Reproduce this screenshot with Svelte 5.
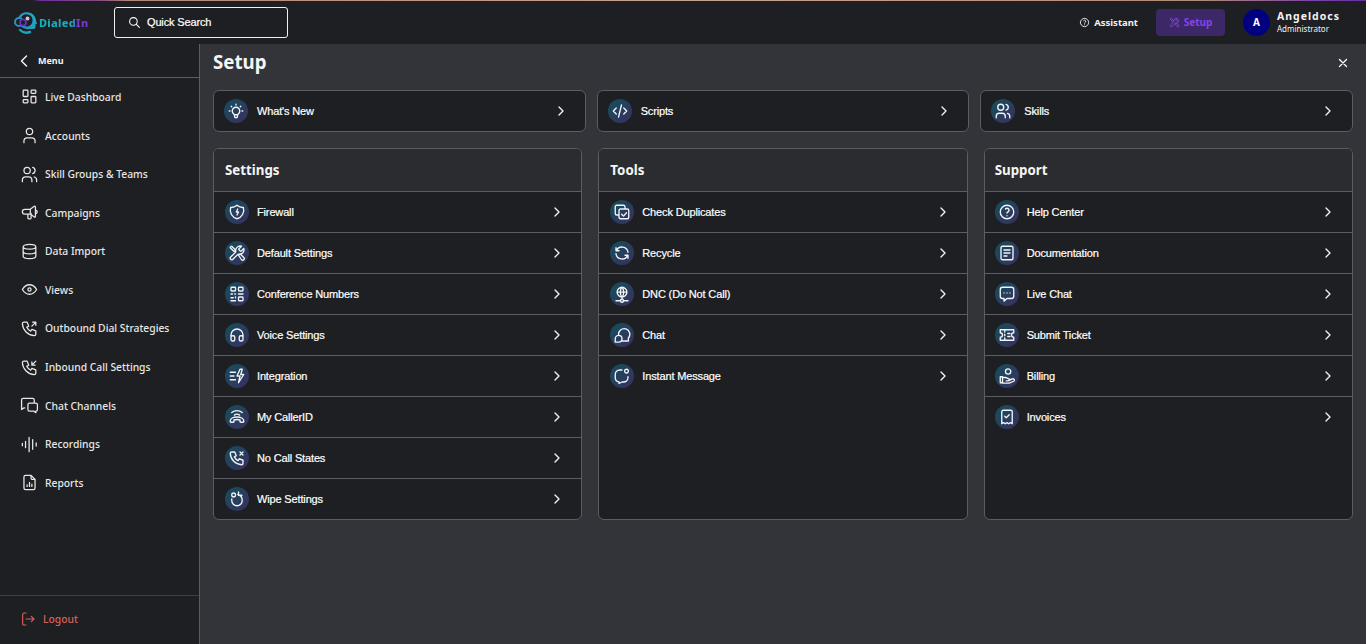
<script>
const I = {
  dash: "M5 4h4a1 1 0 0 1 1 1v6a1 1 0 0 1-1 1H5a1 1 0 0 1-1-1V5a1 1 0 0 1 1-1z M5 16h4a1 1 0 0 1 1 1v2a1 1 0 0 1-1 1H5a1 1 0 0 1-1-1v-2a1 1 0 0 1 1-1z M15 12h4a1 1 0 0 1 1 1v6a1 1 0 0 1-1 1h-4a1 1 0 0 1-1-1v-6a1 1 0 0 1 1-1z M15 4h4a1 1 0 0 1 1 1v2a1 1 0 0 1-1 1h-4a1 1 0 0 1-1-1V5a1 1 0 0 1 1-1z",
  user: "M8 7a4 4 0 1 0 8 0a4 4 0 0 0-8 0 M5 21v-2a4 4 0 0 1 4-4h6a4 4 0 0 1 4 4v2",
  users: "M5 7a4 4 0 1 0 8 0a4 4 0 1 0-8 0 M3 21v-2a4 4 0 0 1 4-4h4a4 4 0 0 1 4 4v2 M16 3.130a4 4 0 0 1 0 7.750 M21 21v-2a4 4 0 0 0-3-3.850",
  horn: "M6 8a3 3 0 0 0 0 6h1 M14 13v6a1 1 0 0 1-1 1h-2a1 1 0 0 1-1-1v-5 M13 8l5-3.800a1 1 0 0 1 1.500.8v12a1 1 0 0 1-1.500.8L13 14H6 M13 8H6 M13 8v6 M21 9.500a2.500 2.500 0 0 1 0 3.500",
  db: "M4 6a8 3 0 1 0 16 0a8 3 0 1 0-16 0 M4 6v6a8 3 0 0 0 16 0V6 M4 12v6a8 3 0 0 0 16 0v-6",
  eye: "M10 12a2 2 0 1 0 4 0a2 2 0 0 0-4 0 M21 12c-2.400 4-5.400 6-9 6s-6.600-2-9-6c2.400-4 5.400-6 9-6s6.600 2 9 6",
  out: "M5 4h4l2 5l-2.500 1.500a11 11 0 0 0 5 5l1.500-2.500l5 2v4a2 2 0 0 1-2 2a16 16 0 0 1-15-15a2 2 0 0 1 2-2 M15 9l5-5 M16 4h4v4",
  inb: "M5 4h4l2 5l-2.500 1.500a11 11 0 0 0 5 5l1.500-2.500l5 2v4a2 2 0 0 1-2 2a16 16 0 0 1-15-15a2 2 0 0 1 2-2 M15 9l5-5 M15 5v4h4",
  msgs: "M6 15H5l-3 2V5a2 2 0 0 1 2-2h12a2 2 0 0 1 2 2v4 M12 9h8a2 2 0 0 1 2 2v6a2 2 0 0 1-2 2v2l-3-2h-5a2 2 0 0 1-2-2v-6a2 2 0 0 1 2-2z",
  wave: "M3 10.500v3 M7 8v8 M11.500 3v18 M16 6v12 M20.500 10v4",
  report: "M14 3v4a1 1 0 0 0 1 1h4 M17 21H7a2 2 0 0 1-2-2V5a2 2 0 0 1 2-2h7l5 5v11a2 2 0 0 1-2 2 M9 17v-2 M12 17v-5 M15 17v-3",
  logout: "M9 3H6a2 2 0 0 0-2 2v14a2 2 0 0 0 2 2h3 M9 12h12 M17 8l4 4l-4 4",
  bulb: "M3 12h1m8-9v1m8 8h1m-15.400-6.400l.7.7m12.100-.7l-.7.7 M9 16a5 5 0 1 1 6 0a3.500 3.500 0 0 0-1 3a2 2 0 0 1-4 0a3.500 3.500 0 0 0-1-3 M9.700 17h4.600",
  code: "M7 8l-4 4l4 4 M17 8l4 4l-4 4 M14 4l-4 16",
  shield: "M12 3a12 12 0 0 0 8.500 3a12 12 0 0 1-8.500 15a12 12 0 0 1-8.500-15a12 12 0 0 0 8.500-3 M13 8l-2 4h3l-2 4",
  tools: "M14.700 6.300a1 1 0 0 0 0 1.400l1.600 1.600a1 1 0 0 0 1.400 0l3.300-3.300a6 6 0 0 1-7.500 7.500l-6.900 6.900a2.100 2.100 0 0 1-3-3l6.900-6.900a6 6 0 0 1 7.500-7.500z M3 4l2-1 5 5-2 2-5-5z M14 15l2-2 5 5a1.500 1.500 0 0 1-3 3z",
  qr: "M5 3h4a1 1 0 0 1 1 1v3a1 1 0 0 1-1 1H5a1 1 0 0 1-1-1V4a1 1 0 0 1 1-1z M15 3h4a1 1 0 0 1 1 1v3a1 1 0 0 1-1 1h-4a1 1 0 0 1-1-1V4a1 1 0 0 1 1-1z M15 16h4a1 1 0 0 1 1 1v3a1 1 0 0 1-1 1h-4a1 1 0 0 1-1-1v-3a1 1 0 0 1 1-1z M4 12h2 M9 12h1 M14 12h6 M4 17h3 M4 21h6 M10 16v1",
  head: "M4 15a2 2 0 0 1 2-2h1a2 2 0 0 1 2 2v3a2 2 0 0 1-2 2H6a2 2 0 0 1-2-2z M15 15a2 2 0 0 1 2-2h1a2 2 0 0 1 2 2v3a2 2 0 0 1-2 2h-1a2 2 0 0 1-2-2z M4 15v-3a8 8 0 0 1 16 0v3",
  integ: "M3 7h7 M3 12h5 M3 17h7 M16 3l-4 9h4l-2 9l7-11h-4l2-7z",
  caller: "M8.500 9.500a6 6 0 0 1 7 0 M5 6a11 11 0 0 1 14 0 M3 17c0-3 4-5 9-5s9 2 9 5v1a1 1 0 0 1-1 1h-3a1 1 0 0 1-1-1v-2c-3-1-5-1-8 0v2a1 1 0 0 1-1 1H4a1 1 0 0 1-1-1z",
  nocall: "M5 4h4l2 5l-2.500 1.500a11 11 0 0 0 5 5l1.500-2.500l5 2v4a2 2 0 0 1-2 2a16 16 0 0 1-15-15a2 2 0 0 1 2-2 M16 4l4 4m0-4l-4 4",
  wipe: "M5 6.500a2.500 2.500 0 1 0 5 0a2.500 2.500 0 1 0-5 0 M5 12v2a7 7 0 0 0 14 0c0-4-2-7-6-8 M14 2.500V7h4.500",
  dup: "M8 10a2 2 0 0 1 2-2h9a2 2 0 0 1 2 2v9a2 2 0 0 1-2 2h-9a2 2 0 0 1-2-2z M16 8V5a2 2 0 0 0-2-2H5a2 2 0 0 0-2 2v9a2 2 0 0 0 2 2h3 M11.500 15l2.500 2.500l4-4.500",
  recycle: "M20 11a8.100 8.100 0 0 0-15.500-2m-.5-4v4h4 M4 13a8.100 8.100 0 0 0 15.500 2m.5 4v-4h-4",
  dnc: "M12 3a6.500 6.500 0 1 0 0 13a6.500 6.500 0 0 0 0-13 M5.500 9.500h13 M12 3c-3 3-3 10 0 13 M12 3c3 3 3 10 0 13 M12 16v3 M4 21h6 M14 21h6 M10 21a2 2 0 1 0 4 0a2 2 0 0 0-4 0",
  chat: "M7.500 12A7.500 7.500 0 1 1 20.500 16V20H12 M3 17a4.500 4.500 0 1 1 9 0a4.500 4.500 0 0 1-4.500 4.500H3z",
  im: "M12 4H9a6 6 0 0 0-6 6v4a6 6 0 0 0 5 6v2l4-2h2a6 6 0 0 0 6-6v-1 M15.500 5.500a2.500 2.500 0 1 0 5 0a2.500 2.500 0 1 0-5 0",
  help: "M3 12a9 9 0 1 0 18 0a9 9 0 1 0-18 0 M12 17v.01 M12 13.500a1.500 1.500 0 0 1 1-1.500a2.600 2.600 0 1 0-3-4",
  doc: "M6 3h12a2 2 0 0 1 2 2v14a2 2 0 0 1-2 2H6a2 2 0 0 1-2-2V5a2 2 0 0 1 2-2z M8 8h8 M8 12h8 M8 16h4",
  live: "M3 6a3 3 0 0 1 3-3h12a3 3 0 0 1 3 3v9a3 3 0 0 1-3 3h-6l-4 3.500V18H6a3 3 0 0 1-3-3z M8 10.500h.01 M12 10.500h.01 M16 10.500h.01",
  ticket: "M3 5h18v4a3 3 0 0 0 0 6v4H3v-4a3 3 0 0 0 0-6z M9 5v3 M9 11v2 M9 16v3 M13 10h3 M13 14h3",
  bill: "M10 6a3.500 3.500 0 1 0 7 0a3.500 3.500 0 1 0-7 0 M3 13h3v8H3z M6 14h4l4 1.500a1.500 1.500 0 0 1 0 3h-3 M14 18l5-2a1.800 1.800 0 0 1 2 3l-6 2.500H6",
  inv: "M5 5a2 2 0 0 1 2-2h10a2 2 0 0 1 2 2v16l-2.300-1.500L14.300 21L12 19.500L9.700 21l-2.400-1.500L5 21z M9 11l2 2l4-4",
  search: "M3 10a7 7 0 1 0 14 0a7 7 0 1 0-14 0 M21 21l-6-6",
  right: "M9 6l6 6l-6 6",
  left: "M15 6l-6 6l6 6",
  close: "M18 6L6 18 M6 6l12 12"
};
const nav = [
  ["Live Dashboard", I.dash], ["Accounts", I.user], ["Skill Groups & Teams", I.users],
  ["Campaigns", I.horn], ["Data Import", I.db], ["Views", I.eye],
  ["Outbound Dial Strategies", I.out], ["Inbound Call Settings", I.inb],
  ["Chat Channels", I.msgs], ["Recordings", I.wave], ["Reports", I.report]
];
const quick = [["What's New", I.bulb], ["Scripts", I.code], ["Skills", I.users]];
const panels = [
  { title: "Settings", items: [["Firewall", I.shield], ["Default Settings", I.tools], ["Conference Numbers", I.qr], ["Voice Settings", I.head], ["Integration", I.integ], ["My CallerID", I.caller], ["No Call States", I.nocall], ["Wipe Settings", I.wipe]] },
  { title: "Tools", items: [["Check Duplicates", I.dup], ["Recycle", I.recycle], ["DNC (Do Not Call)", I.dnc], ["Chat", I.chat], ["Instant Message", I.im]] },
  { title: "Support", items: [["Help Center", I.help], ["Documentation", I.doc], ["Live Chat", I.live], ["Submit Ticket", I.ticket], ["Billing", I.bill], ["Invoices", I.inv]] }
];
</script>

{#snippet icon(d, cls)}
  <svg class={cls} viewBox="0 0 24 24" fill="none" stroke="currentColor" stroke-linecap="round" stroke-linejoin="round"><path {d} /></svg>
{/snippet}

{#snippet row(label, d)}
  <span class="badge">{@render icon(d, "bi")}</span>
  <span class="label">{label}</span>
  {@render icon(I.right, "chev")}
{/snippet}

<div class="page">
  <header class="top">
    <div class="logo">
      <svg class="mark" viewBox="0 0 24 24" fill="none">
        <defs>
          <linearGradient id="hd" x1="1" y1="0" x2="0" y2="1">
            <stop offset="0" stop-color="#17b5c4"/>
            <stop offset="1" stop-color="#2a88bd"/>
          </linearGradient>
        </defs>
        <path d="M6 6a9.500 9.500 0 0 1 17 4.500l1 3.500h-1.500v3a2 2 0 0 1-2 2H16a9 9 0 0 1-8.500-3A9.500 9.500 0 0 1 6 6z" fill="url(#hd)"/>
        <path d="M8 8a6 6 0 0 1 11.500 2.500c0 3.500-2.500 6-6 6A6.500 6.500 0 0 1 8 8z" fill="#1e1f22"/>
        <circle cx="6" cy="12" r="4" fill="#1e1f22" stroke="#2b8fbe" stroke-width="2"/>
        <circle cx="10" cy="12.500" r="3" fill="#1e1f22" stroke="#6b2fc4" stroke-width="1.700"/>
        <circle cx="14.500" cy="8.500" r="1.900" fill="#e3b6ee"/>
        <path d="M7 20c3 3 7 3 10 2" stroke="#1ba4bf" stroke-width="2.400" stroke-linecap="round"/>
      </svg>
      <span class="word">DialedIn</span>
    </div>
    <div class="search">{@render icon(I.search, "si")}<span>Quick Search</span></div>
    <div class="actions">
      <div class="assist">{@render icon(I.help, "ai")}<span>Assistant</span></div>
      <div class="setup">{@render icon(I.tools, "ai")}<span>Setup</span></div>
      <div class="who">
        <span class="avatar">A</span>
        <div class="names"><b>Angeldocs</b><small>Administrator</small></div>
      </div>
    </div>
  </header>

  <div class="body">
    <aside class="side">
      <div class="menu">{@render icon(I.left, "mi")}<span>Menu</span></div>
      <nav class="nav">
        {#each nav as [label, d]}
          <div class="nitem">{@render icon(d, "ni")}<span>{label}</span></div>
        {/each}
      </nav>
      <div class="logout">{@render icon(I.logout, "li")}<span>Logout</span></div>
    </aside>

    <main class="main">
      <div class="head">
        <h1>Setup</h1>
        {@render icon(I.close, "x")}
      </div>
      <div class="quick">
        {#each quick as [label, d]}
          <div class="qcard">{@render row(label, d)}</div>
        {/each}
      </div>
      <div class="panels">
        {#each panels as p}
          <section class="panel">
            <h2>{p.title}</h2>
            {#each p.items as [label, d]}
              <div class="prow">{@render row(label, d)}</div>
            {/each}
          </section>
        {/each}
      </div>
    </main>
  </div>
</div>

<style>
  :global(body) { margin: 0; background: #333439; overflow: hidden; }
  .page { height: 644px; display: flex; flex-direction: column; font-family: "Noto Sans", sans-serif; color: #f2f2f2; }
  .top {
    height: 42px; flex: none; display: flex; align-items: center; background: #1e1f22;
    border-top: 1px solid transparent; border-bottom: 1px solid #5c5d61;
    border-image: linear-gradient(90deg, #1e1f22 0, #1e1f22 33px, #6b2fa0 40px, #8a4a80 100px, #b58a78 130px, #c9a28c 700px, #b58a78 1200px, #7a3fa8 1320px, #6b2fa0 100%) 1 0 0 0;
  }
  .logo { width: 114px; flex: none; display: flex; align-items: center; padding-left: 13px; box-sizing: border-box; }
  .mark { width: 24px; height: 24px; flex: none; }
  .word {
    margin-left: 2px; font-weight: 800; font-size: 11px; letter-spacing: .3px;
    background: linear-gradient(90deg, #16b0c2 0, #16b0c2 66%, #7a35d0 80%, #7a35d0 100%);
    -webkit-background-clip: text; background-clip: text; color: transparent;
  }
  .search {
    width: 159px; height: 29px; border: 1px solid #f0f0f0; border-radius: 3px; display: flex; align-items: center;
    font: 11px "Liberation Sans", sans-serif; letter-spacing: -.15px; color: #fff; padding-left: 13px;
    -webkit-text-stroke: .2px #fff;
  }
  .si { width: 13px; height: 13px; stroke-width: 2; margin-right: 6px; }
  .actions { margin-left: auto; display: flex; align-items: center; }
  .assist { display: flex; align-items: center; gap: 4px; font-size: 9.500px; font-weight: 700; margin-right: 18px; }
  .ai { width: 11px; height: 11px; stroke-width: 2; }
  .setup {
    width: 69px; height: 27px; border-radius: 4px; background: #3c2867; color: #8344e8; font-size: 10px; font-weight: 700;
    display: flex; align-items: center; justify-content: center; gap: 4px;
  }
  .who { display: flex; align-items: center; margin-left: 18px; width: 123px; }
  .avatar {
    width: 27px; height: 27px; border-radius: 50%; background: #000080; color: #fff; font-size: 10px; font-weight: 700;
    display: flex; align-items: center; justify-content: center;
  }
  .names { margin-left: 7px; display: flex; flex-direction: column; margin-top: -1px; }
  .names b { font-size: 10.500px; font-weight: 700; letter-spacing: 1px; line-height: 14px; }
  .names small { font-size: 8px; line-height: 11px; }

  .body { flex: 1; display: flex; min-height: 0; }
  .side { width: 199px; flex: none; background: #1e1f22; border-right: 1px solid #5c5d61; display: flex; flex-direction: column; }
  .menu { height: 33px; display: flex; align-items: center; padding-left: 14px; border-bottom: 1px solid #5c5d61; font-size: 9px; font-weight: 700; gap: 4px; }
  .mi { width: 20px; height: 20px; stroke-width: 1.800; }
  .nav { margin-top: -.4px; }
  .nitem { height: 38.600px; display: flex; align-items: center; padding-left: 19.500px; gap: 6.500px; font-size: 10.300px; font-weight: 500; color: #e8e8e8; }
  .ni { width: 19px; height: 19px; stroke-width: 1.600; flex: none; }
  .li { width: 16px; height: 16px; stroke-width: 1.700; flex: none; }
  .logout { margin-top: auto; height: 46px; padding-bottom: 2px; border-top: 1px solid #3f4044; display: flex; align-items: center; padding-left: 20px; gap: 7px; color: #d9605a; font-size: 10.300px; font-weight: 500; }

  .main { flex: 1; min-width: 0; padding: 0 13px; }
  .head { height: 46px; display: flex; align-items: center; justify-content: space-between; }
  h1 { margin: 0; font-size: 18.700px; font-weight: 700; color: #f5f5f5; line-height: 1; position: relative; top: -5px; }
  .x { width: 14px; height: 14px; stroke-width: 2.200; color: #fff; margin-right: 3px; position: relative; top: -4px; }
  .quick { display: grid; grid-template-columns: repeat(3, 1fr); gap: 11px; }
  .qcard { height: 40px; background: #1e1f22; border: 1px solid #5c5d61; border-radius: 6px; display: flex; align-items: center; padding: 0 16px 0 10px; }
  .panels { display: grid; grid-template-columns: repeat(3, 1fr); gap: 16px; margin-top: 16px; }
  .panel { height: 370px; background: #1e1f22; border: 1px solid #5c5d61; border-radius: 6px; overflow: hidden; }
  h2 { margin: 0; height: 42px; padding: 0 0 0 11px; box-sizing: border-box; background: #2b2c30; font-size: 13.300px; font-weight: 700; display: flex; align-items: center; color: #f5f5f5; }
  .prow { height: 40px; border-top: 1px solid #5c5d61; display: flex; align-items: center; padding: 0 16px 0 11px; }
  .panel:last-child h2 { padding-left: 10px; }
  .panel:last-child .prow { padding-left: 10px; }
  .badge {
    width: 24px; height: 24px; border-radius: 50%; flex: none; display: flex; align-items: center; justify-content: center;
    background: linear-gradient(135deg, #134f5c, #3a2f60); color: #f2f4f6;
  }
  .bi { width: 18px; height: 18px; stroke-width: 1.800; }
  .label { margin-left: 8px; font: 11px "Liberation Sans", sans-serif; letter-spacing: -.15px; color: #fff; flex: 1; -webkit-text-stroke: .2px #fff; }
  .qcard .label { margin-left: 9px; }
  .chev { width: 16px; height: 16px; stroke-width: 2; color: #f2f2f2; flex: none; }
</style>
